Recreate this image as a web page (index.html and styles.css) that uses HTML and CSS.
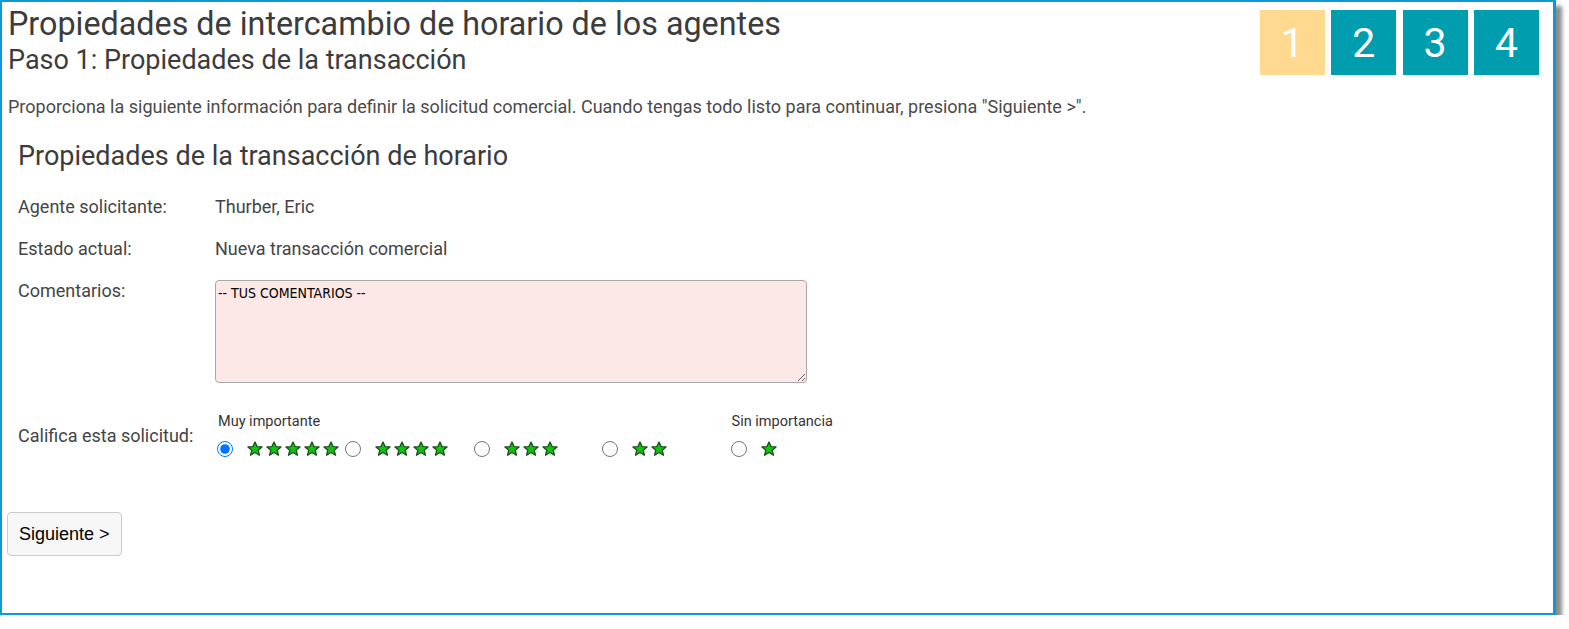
FILE: index.html
```html
<!DOCTYPE html>
<html lang="es">
<head>
<meta charset="utf-8">
<title>Propiedades de intercambio de horario</title>
<link rel="stylesheet" href="styles.css">
</head>
<body>
<svg width="0" height="0" class="defs" aria-hidden="true">
  <defs>
    <symbol id="star" viewBox="0 0 20 20">
      <polygon points="10,1.2 12.6,7 18.8,7.4 14,11.5 15.6,17.8 10,14.4 4.4,17.8 6,11.5 1.2,7.4 7.4,7" fill="#0fc40f" stroke="#1f4a1f" stroke-width="1.6" stroke-linejoin="round"/>
    </symbol>
  </defs>
</svg>
<div class="frame">
  <header class="header">
    <div class="titles">
      <h1 class="title">Propiedades de intercambio de horario de los agentes</h1>
      <h2 class="subtitle">Paso 1: Propiedades de la transacción</h2>
    </div>
    <div class="steps">
      <div class="step current">1</div>
      <div class="step">2</div>
      <div class="step">3</div>
      <div class="step">4</div>
    </div>
  </header>
  <p class="intro">Proporciona la siguiente información para definir la solicitud comercial. Cuando tengas todo listo para continuar, presiona "Siguiente &gt;".</p>
  <section class="section">
    <h3 class="section-title">Propiedades de la transacción de horario</h3>
    <div class="form">
      <div class="label">Agente solicitante:</div>
      <div class="value">Thurber, Eric</div>
      <div class="label">Estado actual:</div>
      <div class="value">Nueva transacción comercial</div>
      <div class="label">Comentarios:</div>
      <div class="value"><textarea class="comments">-- TUS COMENTARIOS --</textarea></div>
      <div class="label label-rate">Califica esta solicitud:</div>
      <div class="value">
        <div class="rating">
          <div class="rate-col">
            <div class="rate-cap">Muy importante</div>
            <label class="rate-opt"><input type="radio" name="rate" checked><span class="stars"><svg><use href="#star"/></svg><svg><use href="#star"/></svg><svg><use href="#star"/></svg><svg><use href="#star"/></svg><svg><use href="#star"/></svg></span></label>
          </div>
          <div class="rate-col">
            <div class="rate-cap"></div>
            <label class="rate-opt"><input type="radio" name="rate"><span class="stars"><svg><use href="#star"/></svg><svg><use href="#star"/></svg><svg><use href="#star"/></svg><svg><use href="#star"/></svg></span></label>
          </div>
          <div class="rate-col">
            <div class="rate-cap"></div>
            <label class="rate-opt"><input type="radio" name="rate"><span class="stars"><svg><use href="#star"/></svg><svg><use href="#star"/></svg><svg><use href="#star"/></svg></span></label>
          </div>
          <div class="rate-col">
            <div class="rate-cap"></div>
            <label class="rate-opt"><input type="radio" name="rate"><span class="stars"><svg><use href="#star"/></svg><svg><use href="#star"/></svg></span></label>
          </div>
          <div class="rate-col">
            <div class="rate-cap">Sin importancia</div>
            <label class="rate-opt"><input type="radio" name="rate"><span class="stars"><svg><use href="#star"/></svg></span></label>
          </div>
        </div>
      </div>
    </div>
  </section>
  <button class="next" type="button">Siguiente &gt;</button>
</div>
</body>
</html>
```
FILE: styles.css
```css
html, body {
  margin: 0;
  padding: 0;
  background: #ffffff;
}
.defs {
  position: absolute;
  width: 0;
  height: 0;
  overflow: hidden;
}
.frame {
  box-sizing: border-box;
  width: 1556px;
  height: 615px;
  border: 2px solid #0d98d8;
  border-right-width: 3px;
  box-shadow: 6px 6px 4px rgba(0, 0, 0, 0.45);
  padding: 3px 14px 0 6px;
  font-family: Roboto, "Liberation Sans", sans-serif;
  color: #444444;
}
.header {
  display: flex;
  justify-content: space-between;
  align-items: flex-start;
}
.title {
  margin: 0;
  font-size: 32.3px;
  line-height: 38px;
  font-weight: 400;
  color: #3c3c3c;
}
.subtitle {
  margin: 1px 0 0 0;
  font-size: 27px;
  line-height: 32px;
  font-weight: 400;
  color: #3c3c3c;
}
.steps {
  display: flex;
  gap: 6.4px;
  margin-top: 5px;
}
.step {
  width: 65px;
  height: 65px;
  background: #009dae;
  color: #ffffff;
  font-size: 41px;
  display: flex;
  align-items: center;
  justify-content: center;
}
.step.current {
  background: #ffd98f;
}
.intro {
  margin: 20px 0 0 0;
  font-size: 18px;
  line-height: 21px;
  color: #4a4a4a;
}
.section {
  padding-left: 10px;
}
.section-title {
  margin: 23px 0 0 0;
  font-size: 27px;
  line-height: 32px;
  font-weight: 400;
  color: #3c3c3c;
}
.form {
  display: grid;
  grid-template-columns: 197px 1fr;
  row-gap: 21px;
  margin-top: 24px;
  font-size: 18px;
  line-height: 21px;
}
.label {
  color: #444444;
}
.value {
  color: #444444;
}
.comments {
  display: block;
  box-sizing: border-box;
  width: 592px;
  height: 103px;
  background: #fce8e6;
  border: 1px solid #a8a8a8;
  border-radius: 4px;
  padding: 3px 2px;
  font-family: "DejaVu Sans Condensed", "Liberation Sans Narrow", "Liberation Sans", sans-serif;
  font-size: 14px;
  line-height: 18px;
  color: #000000;
  resize: both;
}
.label-rate {
  padding-top: 21px;
}
.rating {
  display: flex;
  margin-top: 9px;
}
.rate-col {
  width: 128.4px;
  flex: none;
}
.rate-cap {
  height: 26px;
  font-size: 14.5px;
  line-height: 17px;
  padding-left: 3px;
  color: #333333;
  white-space: nowrap;
}
.rate-opt {
  display: flex;
  align-items: center;
  height: 20px;
  white-space: nowrap;
}
.rate-opt input {
  width: 16px;
  height: 16px;
  margin: 0 14px 0 2px;
  flex: none;
}
.stars {
  display: flex;
  gap: 3px;
}
.stars svg {
  width: 16px;
  height: 16px;
  display: block;
}
.next {
  display: block;
  margin-top: 53px;
  margin-left: -1px;
  height: 44px;
  padding: 0 11px;
  background: #f7f7f7;
  border: 1px solid #cccccc;
  border-radius: 4px;
  font-family: "Liberation Sans", Arial, sans-serif;
  font-size: 18px;
  color: #000000;
}
```
